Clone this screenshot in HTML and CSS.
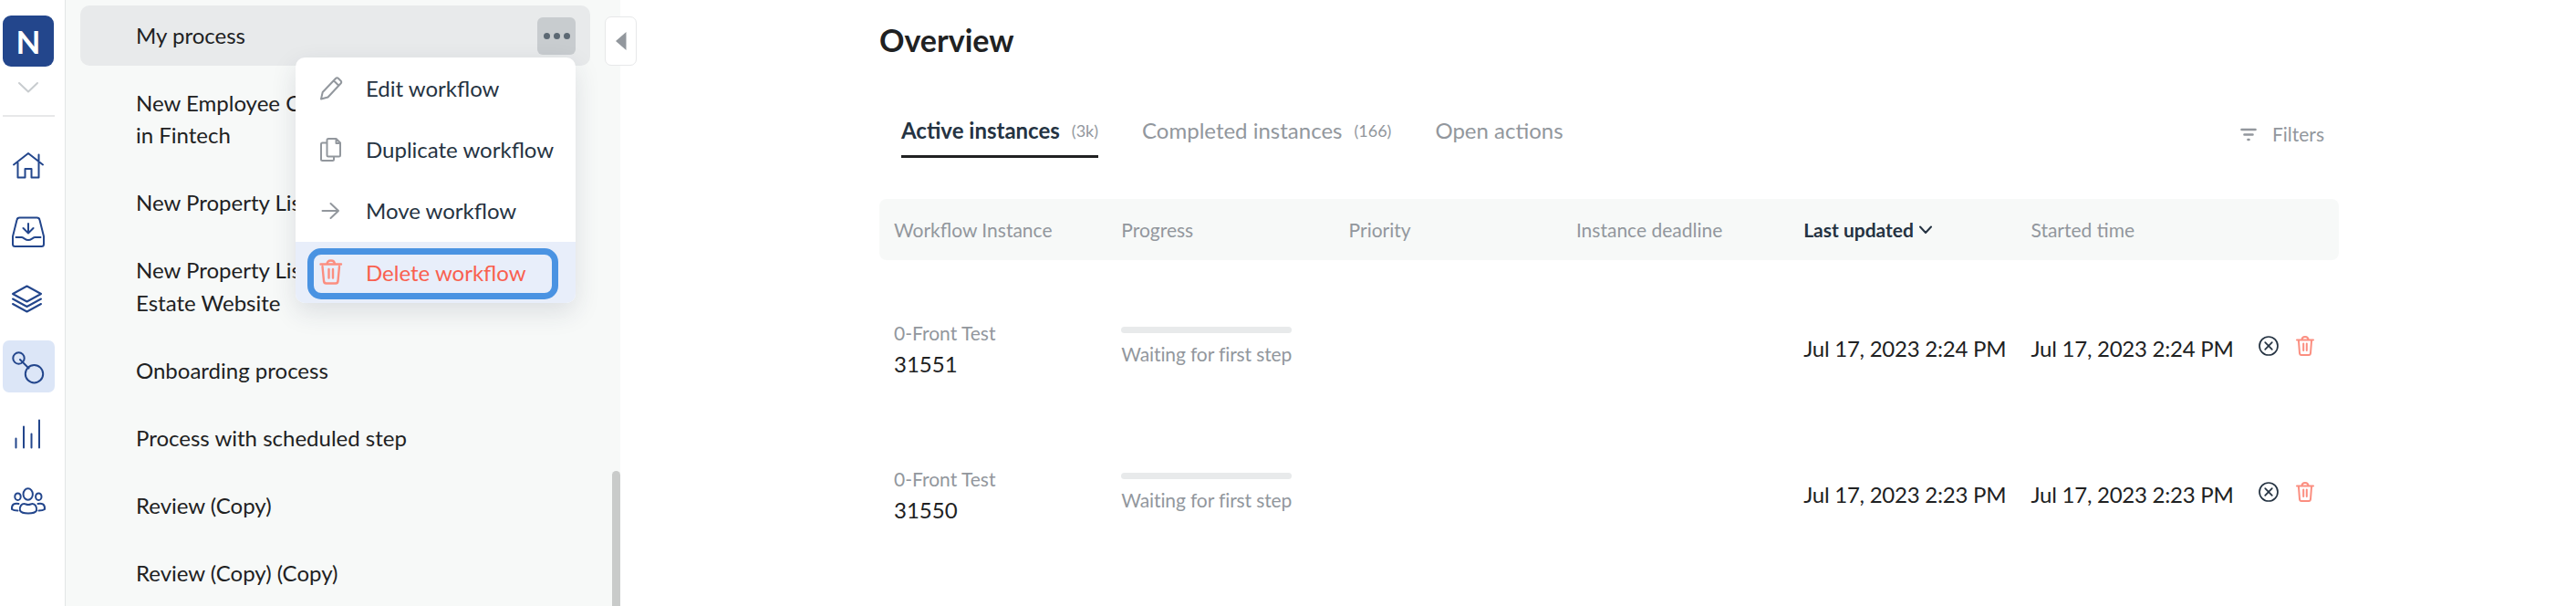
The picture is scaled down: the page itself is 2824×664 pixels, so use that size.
FILE: index.html
```html
<!DOCTYPE html>
<html lang="en">
<head>
  <meta charset="UTF-8">
  <meta name="viewport" content="width=device-width, initial-scale=1.0">
  <link rel="stylesheet" href="styles.css">
  <title>Overview</title>
</head>
<body>
  <div class="app">
    <nav class="rail">
      <div class="logo">N</div>
      <svg class="rail-chevron" width="24" height="14" viewBox="0 0 24 14"><path d="M2 2l10 9.500 10-9.500"/></svg>
      <hr class="rail-line">
      <a class="rail-item">
        <svg width="40" height="40" viewBox="0 0 40 40"><path d="M4 19.500L20 7l16 12.500M8.500 17v16.500h8V24h7v9.500h8V8.500"/></svg>
      </a>
      <a class="rail-item">
        <svg width="40" height="40" viewBox="0 0 40 40"><path d="M10.500 4.500h19q2.500 0 3 2.500l4.500 18v8.500q0 2.500-2.500 2.500h-29Q3 36 3 33.500V25L7.500 7q.500-2.500 3-2.500z"/><path d="M20 11v10M14.500 16l5.500 5.500 5.500-5.500M6.500 26h6c2.500 0 4 3 7.500 3s5-3 7.500-3h6"/></svg>
      </a>
      <a class="rail-item">
        <svg width="40" height="40" viewBox="0 0 40 40"><path d="M18.500 5.500l15.500 8.500-15.500 8.500L3 14zM3 19.500l15.500 8.500L34 19.500M3 25l15.500 8.500L34 25"/></svg>
      </a>
      <a class="rail-item active">
        <svg width="40" height="40" viewBox="0 0 40 40"><circle cx="9.500" cy="10.500" r="6.200"/><circle cx="26.500" cy="27.700" r="9.700"/><path d="M11 12l9.500 9.500"/></svg>
      </a>
      <a class="rail-item">
        <svg width="40" height="40" viewBox="0 0 40 40"><path d="M6.500 35.500v-10M15 35.500v-23M23.500 35.500V20.500M32 35.500V5.500"/></svg>
      </a>
      <a class="rail-item">
        <svg width="40" height="40" viewBox="0 0 40 40"><ellipse cx="19.700" cy="12.500" rx="5.200" ry="6.200"/><ellipse cx="8.500" cy="15.200" rx="3.200" ry="3.800"/><ellipse cx="31.300" cy="15.200" rx="3.200" ry="3.800"/><path d="M11 30.500c-1-5 2-7.500 4.500-7.500 1.500 0 2.500 1 4.500 1s3-1 4.500-1c3 0 5 3 4.500 7.500-1 2-5 3-9 3s-8-1-9-3zM9.500 23c-4-1-8 0-7.500 6 2 1.500 3.500 1.500 6.500 1.500M30.500 23c4-1 8 0 7.500 6-2 1.500-3.500 1.500-6.500 1.500"/></svg>
      </a>
    </nav>

    <aside class="sidebar">
      <ul class="workflows">
        <li class="workflow selected">My process
          <button class="more"><i></i><i></i><i></i></button>
        </li>
        <li class="workflow">New Employee Onboarding<br>in Fintech</li>
        <li class="workflow">New Property Listing</li>
        <li class="workflow">New Property Listing Real<br>Estate Website</li>
        <li class="workflow">Onboarding process</li>
        <li class="workflow">Process with scheduled step</li>
        <li class="workflow">Review (Copy)</li>
        <li class="workflow">Review (Copy) (Copy)</li>
      </ul>
      <div class="scrollbar"></div>
      <button class="collapse"><svg width="12" height="20" viewBox="0 0 12 20"><path d="M11.500 0v20L0 10z"/></svg></button>

      <div class="menu">
        <a class="menu-item">
          <svg width="28" height="28" viewBox="0 0 28 28"><path d="M2 25.500l1.700-7.500L18 3q1.500-1.500 3 0l2.500 2.500q1.500 1.500 0 3L9.500 23.500zM15.800 5.300l5.500 5.500"/></svg>
          Edit workflow
        </a>
        <a class="menu-item">
          <svg width="28" height="28" viewBox="0 0 28 28"><path d="M10 2h8.500l4.500 4.500V20q0 1.500-1.500 1.500H10Q8.500 21.500 8.500 20V3.500Q8.500 2 10 2zM18.500 2v5H23M8.500 6.500h-5Q2 6.500 2 8v16.500Q2 26 3.500 26h11q1.500 0 1.500-1.500v-3"/></svg>
          Duplicate workflow
        </a>
        <a class="menu-item">
          <svg width="28" height="28" viewBox="0 0 28 28"><path d="M3.500 14H21M12.500 6l8.500 8-8.500 8"/></svg>
          Move workflow
        </a>
        <a class="menu-item delete">
          <svg width="28" height="28" viewBox="0 0 28 28"><path d="M1.500 5.500H24M8.500 5.500q0-4 4.200-4t4.200 4M3.500 8L5 24q.300 2.500 2.500 2.500H18q2.200 0 2.500-2.500L22 8M10.500 11v9.500M15 11v9.500"/></svg>
          Delete workflow
        </a>
        <div class="focus-ring"></div>
      </div>
    </aside>

    <main class="content">
      <h1>Overview</h1>
      <div class="tabs">
        <a class="tab current"><b>Active instances</b><small>(3k)</small></a>
        <a class="tab">Completed instances<small>(166)</small></a>
        <a class="tab">Open actions</a>
        <a class="filters">
          <svg width="18" height="16" viewBox="0 0 18 16"><path d="M1.500 3h15M4.500 8.500h9M8.500 14h1"/></svg>
          Filters
        </a>
      </div>

      <div class="row head">
        <span>Workflow Instance</span>
        <span>Progress</span>
        <span>Priority</span>
        <span>Instance deadline</span>
        <span class="sorted">Last updated <svg width="14" height="10" viewBox="0 0 14 10"><path d="M1 1.500l6 6.500 6-6.500"/></svg></span>
        <span>Started time</span>
      </div>

      <div class="row">
        <div class="instance"><small>0-Front Test</small>31551</div>
        <div><div class="progress"><div class="bar"></div>Waiting for first step</div></div>
        <div></div>
        <div></div>
        <div class="date">Jul 17, 2023 2:24 PM</div>
        <div class="date">Jul 17, 2023 2:24 PM</div>
        <div class="actions">
          <svg class="cancel" width="22" height="22" viewBox="0 0 22 22"><circle cx="11" cy="11" r="10"/><path d="M7.200 7.200l7.600 7.600M14.800 7.200l-7.600 7.600"/></svg>
          <svg class="trash" width="20" height="22" viewBox="0 0 20 22"><path d="M1 4.500h18M6.500 4.500q0-3.500 3.500-3.500t3.500 3.500M3 6l1 13q.200 2 2 2h8q1.800 0 2-2l1-13M8.200 8.500v7.500M11.800 8.500v7.500"/></svg>
        </div>
      </div>

      <div class="row">
        <div class="instance"><small>0-Front Test</small>31550</div>
        <div><div class="progress"><div class="bar"></div>Waiting for first step</div></div>
        <div></div>
        <div></div>
        <div class="date">Jul 17, 2023 2:23 PM</div>
        <div class="date">Jul 17, 2023 2:23 PM</div>
        <div class="actions">
          <svg class="cancel" width="22" height="22" viewBox="0 0 22 22"><circle cx="11" cy="11" r="10"/><path d="M7.200 7.200l7.600 7.600M14.800 7.200l-7.600 7.600"/></svg>
          <svg class="trash" width="20" height="22" viewBox="0 0 20 22"><path d="M1 4.500h18M6.500 4.500q0-3.500 3.500-3.500t3.500 3.500M3 6l1 13q.200 2 2 2h8q1.800 0 2-2l1-13M8.200 8.500v7.500M11.800 8.500v7.500"/></svg>
        </div>
      </div>
    </main>
  </div>
</body>
</html>
```
FILE: styles.css
```css
* {
  box-sizing: border-box;
}

body {
  margin: 0;
  height: 664px;
  overflow: hidden;
  background: #fff;
  color: #202122;
  font-family: Lato, "Liberation Sans", sans-serif;
  font-size: 24px;
}

svg {
  display: block;
  flex: none;
  fill: none;
  stroke: currentColor;
  stroke-width: 2;
  stroke-linecap: round;
  stroke-linejoin: round;
}

.app {
  display: flex;
  height: 664px;
}

/* icon rail */
.rail {
  width: 72px;
  padding: 17px 12px 0 3px;
  border-right: 1px solid #e2e6e6;
  display: flex;
  flex-direction: column;
  align-items: center;
  color: #23468c;
}

.logo {
  width: 56px;
  height: 56px;
  border-radius: 9px;
  background: #23468c;
  color: #fff;
  font-size: 35px;
  font-weight: bold;
  line-height: 56px;
  text-align: center;
}

.rail-chevron {
  margin-top: 16px;
  color: #c8cccf;
}

.rail-line {
  width: 57px;
  height: 2px;
  margin: 23px 0 24px;
  border: 0;
  background: #e7e8e9;
}

.rail-item {
  width: 57px;
  height: 57px;
  margin-bottom: 16.700px;
  border-radius: 7px;
  display: flex;
  flex: none;
  align-items: center;
  justify-content: center;
}

.rail-item.active {
  background: #dce6f7;
}

/* workflow list */
.sidebar {
  position: relative;
  width: 608px;
  background: #f7f9f8;
}

.workflows {
  margin: 0;
  padding: 6px 33px 0 16px;
  list-style: none;
}

.workflow {
  position: relative;
  margin-bottom: 8px;
  padding: 14.500px 60px 16.500px 61px;
  border-radius: 10px;
  line-height: 35.200px;
  white-space: nowrap;
}

.workflow.selected {
  background: #e8eaeb;
}

.more {
  position: absolute;
  top: 13px;
  right: 16px;
  width: 42px;
  height: 41px;
  padding: 0;
  border: 0;
  border-radius: 6px;
  background: #c8cccf;
  display: flex;
  align-items: center;
  justify-content: center;
  gap: 4px;
}

.more i {
  width: 7px;
  height: 7px;
  border-radius: 50%;
  background: #5c6873;
}

.scrollbar {
  position: absolute;
  top: 516px;
  right: 0;
  width: 9px;
  height: 160px;
  border-radius: 5px;
  background: #c9cbca;
}

.collapse {
  position: absolute;
  top: 18px;
  left: 591px;
  width: 35px;
  height: 54px;
  padding: 0;
  border: 1px solid #e7e8e9;
  border-radius: 7px;
  background: #fff;
  display: flex;
  align-items: center;
  justify-content: center;
}

.collapse svg {
  fill: #92979d;
  stroke: none;
}

/* context menu */
.menu {
  position: absolute;
  top: 63px;
  left: 252px;
  width: 307px;
  border-radius: 10px;
  background: #fff;
  box-shadow: 0 10px 28px rgba(40, 50, 80, 0.13);
}

.menu-item {
  height: 67.200px;
  padding-left: 26px;
  display: flex;
  align-items: center;
  gap: 23px;
  color: #253342;
}

.menu-item svg {
  color: #92979d;
}

.menu-item.delete {
  border-radius: 0 0 10px 10px;
  background: #e8eefa;
  color: #f9604f;
}

.menu-item.delete svg {
  color: #fb8e80;
  stroke-width: 2.400;
}

.focus-ring {
  position: absolute;
  left: 13px;
  bottom: 4px;
  width: 275px;
  height: 56px;
  border: 7px solid #4a93e2;
  border-radius: 15px;
}

/* overview */
.content {
  width: 1600px;
  margin-left: 284px;
}

h1 {
  margin: 22px 0 0;
  font-size: 34px;
  line-height: 44px;
}

.tabs {
  display: flex;
  gap: 48px;
  height: 52px;
  margin-top: 56px;
  padding: 0 16px 0 24px;
  color: #92979d;
}

.tab {
  display: flex;
  align-items: center;
  gap: 13px;
  height: 51px;
  padding-bottom: 7px;
  border-bottom: 3px solid transparent;
}

.tab small {
  font-size: 18px;
}

.tab.current {
  border-color: #202122;
}

.tab b {
  color: #253342;
}

.filters {
  display: flex;
  align-items: center;
  gap: 17px;
  margin-left: auto;
  padding-bottom: 3px;
  font-size: 21px;
}

.filters svg {
  stroke-width: 2.600;
}

.row {
  display: grid;
  grid-template-columns: repeat(6, 249.300px) 1fr;
  height: 160px;
  padding-left: 16px;
}

.head {
  height: 67px;
  margin: 44px 0 47px;
  align-items: center;
  border-radius: 8px;
  background: #f7f9f8;
  color: #92979d;
  font-size: 21px;
}

.sorted {
  display: flex;
  align-items: center;
  gap: 6px;
  color: #253342;
  font-weight: bold;
}

.instance {
  padding-top: 16px;
  line-height: 34px;
}

.instance small {
  display: block;
  color: #92979d;
  font-size: 21px;
}

.progress {
  width: 187px;
  padding-top: 26px;
  color: #92979d;
  font-size: 21px;
  letter-spacing: -0.120px;
  font-variant-ligatures: common-ligatures;
  line-height: 26px;
  white-space: nowrap;
}

.bar {
  height: 7px;
  margin-bottom: 10px;
  border-radius: 4px;
  background: #e8eaeb;
}

.date {
  padding-top: 34px;
  letter-spacing: -0.240px;
  line-height: 32px;
  white-space: nowrap;
}

.actions {
  display: flex;
  gap: 19px;
  padding-top: 36px;
}

.cancel {
  color: #253342;
  stroke-width: 1.700;
}

.trash {
  color: #fb8e80;
}
```
